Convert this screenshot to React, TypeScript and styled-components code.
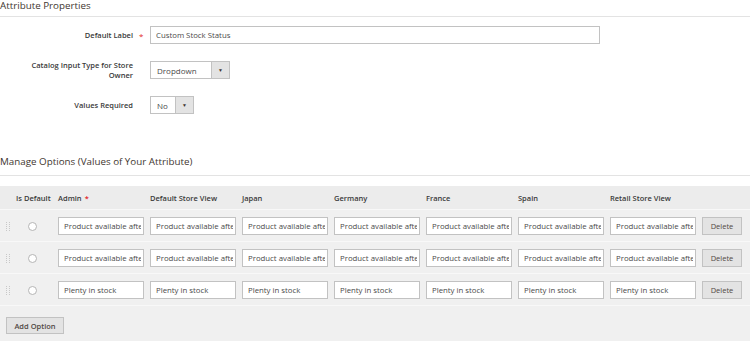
import React from "react";
import styled, { createGlobalStyle } from "styled-components";

const Global = createGlobalStyle`
  html, body { margin: 0; padding: 0; background: #fff; }
  body { font-family: "Open Sans", "Liberation Sans", sans-serif; color: #303030; }
  * { box-sizing: border-box; }
`;

const Page = styled.div`
  width: 750px;
  height: 341px;
  overflow: hidden;
  display: flex;
  flex-direction: column;
`;

const SectionTitle = styled.h2<{ $top?: number; $bottom?: number }>`
  margin: ${(p) => p.$top ?? 0}px 0 0 0;
  padding: 0 0 ${(p) => p.$bottom ?? 4}px 0;
  font-size: 9.8px;
  line-height: 12px;
  font-weight: 400;
  color: #41362f;
  border-bottom: 1px solid #e3e3e3;
`;

const Form = styled.div`
  display: flex;
  flex-direction: column;
  gap: 16px;
  padding-top: 9px;
`;

const FieldRow = styled.div`
  display: flex;
  align-items: center;
`;

const Label = styled.div`
  width: 133px;
  text-align: right;
  font-size: 7.5px;
  line-height: 10px;
  font-weight: 600;
  color: #3a3a3a;
`;

const StarCell = styled.div`
  width: 17px;
  padding-left: 6px;
  font-size: 8px;
  color: #e22626;
`;

const TextInput = styled.div<{ $width: number }>`
  width: ${(p) => p.$width}px;
  height: 18px;
  border: 1px solid #c2c2c2;
  background: #fff;
  display: flex;
  align-items: center;
  padding-left: 5px;
  font-size: 7.8px;
  color: #4a4a4a;
`;

const InputText = styled.span`
  flex: 1;
  margin-right: 2px;
  white-space: nowrap;
  overflow: hidden;
`;

const Select = styled.div<{ $width: number }>`
  width: ${(p) => p.$width}px;
  height: 18px;
  border: 1px solid #c2c2c2;
  background: #fff;
  display: flex;
  align-items: stretch;
  font-size: 8px;
  color: #4a4a4a;
`;

const SelectValue = styled.div`
  flex: 1;
  display: flex;
  align-items: center;
  padding-left: 6px;
`;

const SelectArrow = styled.div`
  width: 18px;
  background: #e3e3e3;
  border-left: 1px solid #c2c2c2;
  display: flex;
  align-items: center;
  justify-content: center;
  font-size: 5px;
  color: #41362f;
`;

const Table = styled.div`
  margin-top: 10px;
  background: #f0f0f0;
  flex: 1;
`;

const GridRow = styled.div<{ $head?: boolean }>`
  display: grid;
  grid-template-columns: 16px 42px repeat(7, 92px) 40px;
  align-items: ${(p) => (p.$head ? "center" : "start")};
  background: ${(p) => (p.$head ? "#ececec" : "#f0f0f0")};
  height: ${(p) => (p.$head ? 24 : 32)}px;
  border-bottom: 1px solid #f8f8f8;
  padding-top: ${(p) => (p.$head ? 0 : 7)}px;
`;

const HeadCell = styled.div`
  font-size: 7.5px;
  font-weight: 600;
  color: #3a3a3a;
  white-space: nowrap;
`;

const Req = styled.span`
  color: #e22626;
  margin-left: 3px;
`;

const Handle = styled.div`
  padding-left: 6px;
  height: 18px;
  display: flex;
  align-items: center;
`;

const RadioCell = styled.div`
  padding-left: 12px;
  height: 18px;
  display: flex;
  align-items: center;
`;

const Radio = styled.span`
  width: 9px;
  height: 9px;
  border-radius: 50%;
  border: 1px solid #b5b5b5;
  background: #fff;
  display: block;
`;

const Button = styled.div<{ $bold?: boolean }>`
  height: 18px;
  display: flex;
  align-items: center;
  justify-content: center;
  background: #e3e3e3;
  border: 1px solid #c2c2c2;
  font-size: 7.5px;
  font-weight: ${(p) => (p.$bold ? 600 : 400)};
  color: #514943;
`;

const Footer = styled.div`
  padding: 11px 0 0 6px;
  display: flex;
`;

const AddButton = styled(Button)`
  width: 58px;
  height: 17px;
`;

const Grip = () => (
  <svg width="4" height="9" viewBox="0 0 4 9">
    {[0, 2, 4, 6, 8].map((y) => (
      <g key={y}>
        <rect x="0" y={y} width="1" height="1" fill="#c8c8c8" />
        <rect x="3" y={y} width="1" height="1" fill="#c8c8c8" />
      </g>
    ))}
  </svg>
);

const columns = ["Default Store View", "Japan", "Germany", "France", "Spain", "Retail Store View"];
const rows = ["Product available after", "Product available after", "Plenty in stock"];

export default function App() {
  return (
    <Page>
      <Global />
      <SectionTitle $bottom={4}>Attribute Properties</SectionTitle>
      <Form>
        <FieldRow>
          <Label>Default Label</Label>
          <StarCell>*</StarCell>
          <TextInput $width={450}>
            <InputText>Custom Stock Status</InputText>
          </TextInput>
        </FieldRow>
        <FieldRow>
          <Label>
            Catalog Input Type for Store
            <br />
            Owner
          </Label>
          <StarCell />
          <Select $width={80}>
            <SelectValue>Dropdown</SelectValue>
            <SelectArrow>▼</SelectArrow>
          </Select>
        </FieldRow>
        <FieldRow>
          <Label>Values Required</Label>
          <StarCell />
          <Select $width={44}>
            <SelectValue>No</SelectValue>
            <SelectArrow>▼</SelectArrow>
          </Select>
        </FieldRow>
      </Form>
      <SectionTitle $top={42} $bottom={7}>
        Manage Options (Values of Your Attribute)
      </SectionTitle>
      <Table>
        <GridRow $head>
          <span />
          <HeadCell>Is Default</HeadCell>
          <HeadCell>
            Admin<Req>*</Req>
          </HeadCell>
          {columns.map((c) => (
            <HeadCell key={c}>{c}</HeadCell>
          ))}
          <span />
        </GridRow>
        {rows.map((r, i) => (
          <GridRow key={i}>
            <Handle>
              <Grip />
            </Handle>
            <RadioCell>
              <Radio />
            </RadioCell>
            {Array.from({ length: 7 }).map((_, j) => (
              <TextInput key={j} $width={86}>
                <InputText>{r}</InputText>
              </TextInput>
            ))}
            <Button>Delete</Button>
          </GridRow>
        ))}
        <Footer>
          <AddButton $bold>Add Option</AddButton>
        </Footer>
      </Table>
    </Page>
  );
}
